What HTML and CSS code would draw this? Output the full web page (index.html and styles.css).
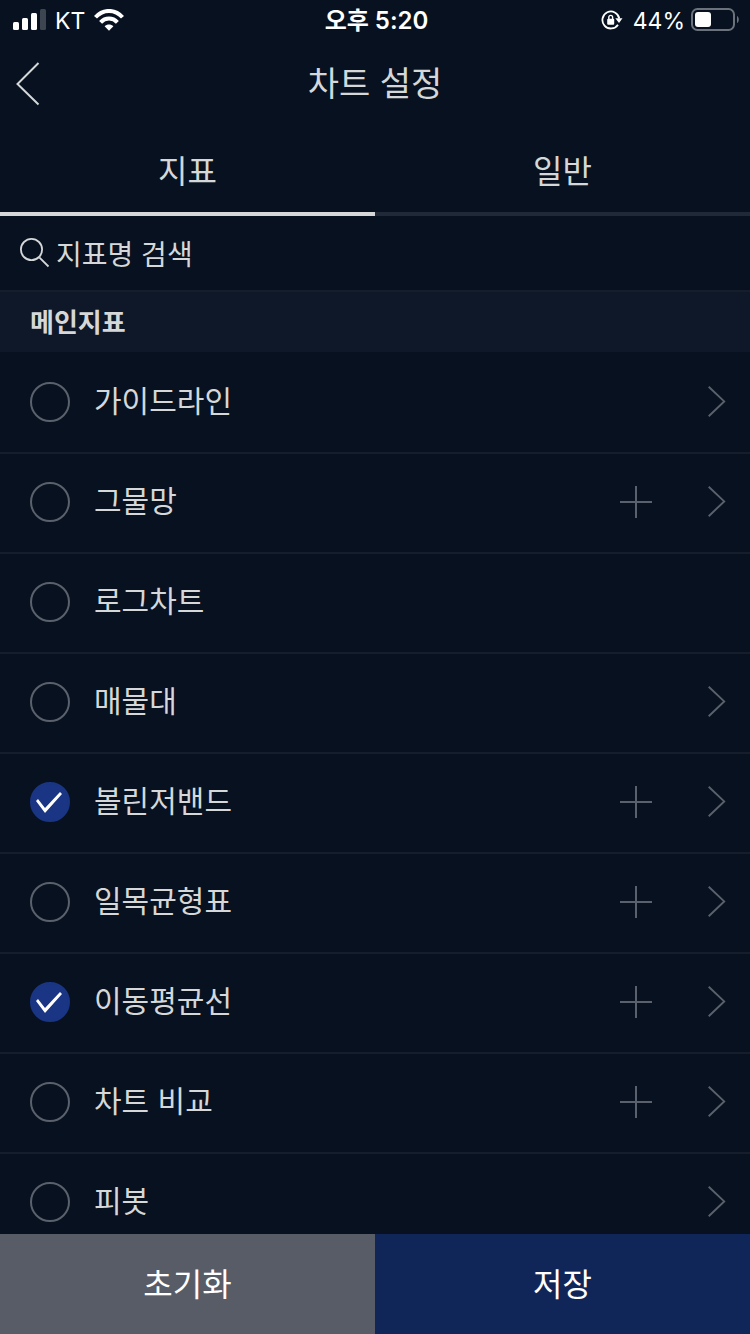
FILE: index.html
```html
<!DOCTYPE html>
<html lang="ko">
<head>
<meta charset="utf-8">
<meta name="viewport" content="width=device-width">
<title>차트 설정</title>
<link rel="stylesheet" href="styles.css">
</head>

<body>
<!-- 아이콘 -->
<svg class="defs" width="0" height="0">
	<symbol id="plus" viewBox="0 0 32 32"><path d="M16 0v32M0 16h32" fill="none" stroke="currentColor" stroke-width="2"/></symbol>
	<symbol id="next" viewBox="0 0 18 32"><path d="M.700.700l15.500 14.700L.700 30.200" fill="none" stroke="currentColor" stroke-width="1.900"/></symbol>
</svg>

<div class="status">
	<div class="status-left">
		<svg width="33" height="22" viewBox="0 0 33 22" fill="#fff">
			<rect x="0" y="13" width="6" height="8" rx="1.500"/>
			<rect x="9" y="9" width="6" height="12" rx="1.500"/>
			<rect x="18" y="4" width="6" height="17" rx="1.500"/>
			<rect x="27" y="0" width="6" height="21" rx="1.500" opacity=".22"/>
		</svg>
		<span>KT</span>
		<svg width="30" height="22" viewBox="0 0 30 22" fill="none" stroke="#fff" stroke-width="4">
			<path d="M1.500 8.300C9-.2 21-.2 28.500 8.300"/>
			<path d="M6.600 13.400c4.700-5.100 12.100-5.100 16.800 0"/>
			<path d="M15 21.800l-4.400-4.500c2.300-2.300 6.500-2.300 8.800 0z" fill="#fff" stroke="none"/>
		</svg>
	</div>
	<div class="status-time">오후 5:20</div>
	<div class="status-right">
		<svg width="22" height="20" viewBox="0 0 22 20" fill="none" stroke="#fff" stroke-width="1.800">
			<path d="M17 14.700A8.500 8.500 0 1 1 18.300 8.500"/>
			<path d="M14.300 8.300h7.200L18 13z" fill="#fff" stroke="none"/>
			<rect x="6.200" y="8.800" width="7" height="6" rx="1" fill="#fff" stroke="none"/>
			<path d="M7.800 9.300V7.300a1.900 1.900 0 0 1 3.800 0v2" stroke-width="1.400"/>
		</svg>
		<span>44%</span>
		<svg width="49" height="24" viewBox="0 0 49 24">
			<rect x="1" y="1" width="42" height="21" rx="5.500" fill="none" stroke="#6b727c" stroke-width="2"/>
			<rect x="4" y="4" width="16" height="15" rx="3" fill="#fff"/>
			<path d="M46 8c2.400 1 2.400 6 0 7z" fill="#6b727c"/>
		</svg>
	</div>
</div>

<header class="header">
	<button class="back" type="button" aria-label="뒤로">
		<svg width="24" height="44" viewBox="0 0 24 44"><path d="M22.500 1L1.500 22l21 20.500" fill="none" stroke="currentColor" stroke-width="2"/></svg>
	</button>
	<h1>차트 설정</h1>
</header>

<nav class="tabs">
	<button class="tab on" type="button">지표</button>
	<button class="tab" type="button">일반</button>
</nav>

<div class="search">
	<label for="keyword" aria-label="지표명 검색">
		<svg width="30" height="30" viewBox="0 0 30 30" fill="none" stroke="currentColor" stroke-width="1.800"><circle cx="11.500" cy="11.500" r="10.600"/><path d="M19.300 19.300L28.500 28.500"/></svg>
	</label>
	<input id="keyword" type="text" placeholder="지표명 검색">
</div>

<h2 class="group">메인지표</h2>

<ul class="list">
	<li>
		<label><input type="checkbox"><span>가이드라인</span></label>
		<button class="go" type="button" aria-label="상세"><svg width="18" height="32"><use href="#next"/></svg></button>
	</li>
	<li>
		<label><input type="checkbox"><span>그물망</span></label>
		<button class="add" type="button" aria-label="추가"><svg width="32" height="32"><use href="#plus"/></svg></button>
		<button class="go" type="button" aria-label="상세"><svg width="18" height="32"><use href="#next"/></svg></button>
	</li>
	<li>
		<label><input type="checkbox"><span>로그차트</span></label>
	</li>
	<li>
		<label><input type="checkbox"><span>매물대</span></label>
		<button class="go" type="button" aria-label="상세"><svg width="18" height="32"><use href="#next"/></svg></button>
	</li>
	<li>
		<label><input type="checkbox" checked><span>볼린저밴드</span></label>
		<button class="add" type="button" aria-label="추가"><svg width="32" height="32"><use href="#plus"/></svg></button>
		<button class="go" type="button" aria-label="상세"><svg width="18" height="32"><use href="#next"/></svg></button>
	</li>
	<li>
		<label><input type="checkbox"><span>일목균형표</span></label>
		<button class="add" type="button" aria-label="추가"><svg width="32" height="32"><use href="#plus"/></svg></button>
		<button class="go" type="button" aria-label="상세"><svg width="18" height="32"><use href="#next"/></svg></button>
	</li>
	<li>
		<label><input type="checkbox" checked><span>이동평균선</span></label>
		<button class="add" type="button" aria-label="추가"><svg width="32" height="32"><use href="#plus"/></svg></button>
		<button class="go" type="button" aria-label="상세"><svg width="18" height="32"><use href="#next"/></svg></button>
	</li>
	<li>
		<label><input type="checkbox"><span>차트 비교</span></label>
		<button class="add" type="button" aria-label="추가"><svg width="32" height="32"><use href="#plus"/></svg></button>
		<button class="go" type="button" aria-label="상세"><svg width="18" height="32"><use href="#next"/></svg></button>
	</li>
	<li>
		<label><input type="checkbox"><span>피봇</span></label>
		<button class="go" type="button" aria-label="상세"><svg width="18" height="32"><use href="#next"/></svg></button>
	</li>
</ul>

<footer class="bottom">
	<button class="reset" type="button">초기화</button>
	<button class="save" type="button">저장</button>
</footer>
</body>
</html>
```
FILE: styles.css
```css
*{ margin:0; padding:0; box-sizing:border-box;}
body{ display:flex; flex-direction:column; height:100vh; background:#07111f; color:#d5d7d8; font-family:"Noto Sans CJK KR",sans-serif; font-size:30px;}
button,input{ font:inherit; color:inherit; background:none; border:0; border-radius:0;}
button{ cursor:pointer;}
svg{ display:block; flex:none;}
.defs{ position:absolute;}

/* 상태바 */
.status{ display:grid; grid-template-columns:1fr auto 1fr; align-items:center; height:40px; flex:none; padding:0 10px 0 13px; color:#fff; font-family:Inter,"Noto Sans CJK KR",sans-serif; font-size:23px; line-height:38px;}
.status-left,.status-right{ display:flex; align-items:center;}
.status-left{ gap:9px;}
.status-right{ justify-content:flex-end; gap:6px;}
.status span,.status-time{ padding-top:2px;}
.status-right span{ margin-left:4px;}
.status-time{ font-weight:600; font-size:24px;}

.header{ display:grid; grid-template-columns:64px 1fr 64px; align-items:center; height:88px; flex:none;}
.header h1{ padding-bottom:4px; font-size:34px; font-weight:400; line-height:48px; text-align:center;}
.back{ padding-left:16px;}

.tabs{ display:flex; height:88px; flex:none;}
.tab{ flex:1; padding-bottom:2px; border-bottom:4px solid #202938; font-size:32px;}
.tab.on{ border-color:#d5d7d8;}

.search{ display:flex; align-items:center; gap:6px; height:74px; flex:none; padding:0 20px;}
.search input{ flex:1; min-width:0; height:48px; font-size:28px; outline:0;}
.search input::placeholder{ color:inherit; opacity:1;}

.group{ flex:none; height:62px; padding:0 30px; border-top:2px solid #161e2c; background:#0f1828; font-size:26px; font-weight:700; line-height:58px;}

/* 지표 목록 */
.list{ flex:1; min-height:0; overflow-y:auto; scrollbar-width:none; list-style:none;}
.list li{ display:flex; align-items:center; height:100px; padding:0 24px 2px 30px; border-top:2px solid #161e2c;}
.list li:first-child{ border-color:transparent;}
.list label{ display:flex; flex:1; align-items:center; gap:24px; line-height:44px;}
.list span{ padding-bottom:6px;}
.list input{ appearance:none; flex:none; width:40px; height:40px; border:2px solid #5a616c; border-radius:50%;}
.list input:checked{ display:grid; place-items:center; border-color:#193583; background:#193583;}
.list input:checked::before{ content:""; width:28px; height:22px; background:#fff; clip-path:polygon(0 10px, 2px 8px, 9px 17px, 24px 1px, 26px 3px, 9px 22px);}
.add{ margin-right:56px; color:#5a616c;}
.go{ color:#5a616c;}

.bottom{ display:flex; flex:none; height:100px; color:#fff;}
.bottom button{ flex:1; padding-bottom:4px; font-size:32px;}
.reset{ background:#575c67;}
.save{ background:#112658;}
```
